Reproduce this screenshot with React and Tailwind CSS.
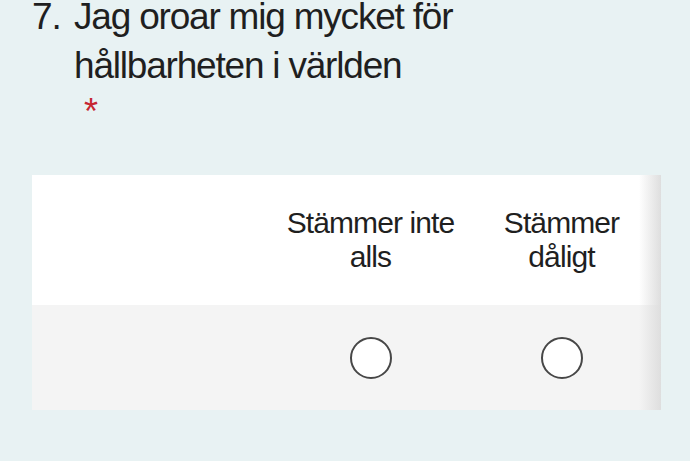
import React from 'react'

const columns = [
  { label: "Stämmer inte alls", lines: ["Stämmer inte", "alls"] },
  { label: "Stämmer dåligt", lines: ["Stämmer", "dåligt"] },
]

const Radio = ({ name, value }) => (
  <label className="flex items-center justify-center cursor-pointer">
    <input type="radio" name={name} value={value} className="sr-only peer" />
    <span className="block w-[42px] h-[42px] rounded-full border-2 border-[#474747] bg-white"></span>
  </label>
)

const App = () => {
  return (
    <div
      className="w-[690px] h-[461px] overflow-hidden bg-[#e8f2f3] text-[#1f1f1f]"
      style={{ fontFamily: '"Liberation Sans", Arial, sans-serif' }}
    >
      <div className="flex pl-[32px] text-[37px] leading-[34px] tracking-[-1.2px]">
        <span className="w-[42px] shrink-0">7.</span>
        <div>
          <h2 className="font-normal">
            <span className="block">Jag oroar mig mycket för</span>
            <span className="block mt-[15px]">hållbarheten i världen</span>
          </h2>
          <span className="block pl-[10px] mt-[14px] text-[36px] leading-[30px] tracking-normal text-[#c62631]">*</span>
        </div>
      </div>

      <div className="relative ml-[32px] mt-[48px] w-[629px] bg-white overflow-hidden">
        <div className="flex h-[130px] items-center">
          <div className="w-[243px] shrink-0"></div>
          {columns.map((col) => (
            <div key={col.label} className="w-[191px] shrink-0 text-center text-[30px] leading-[34px] tracking-[-0.9px]">
              {col.lines.map((l) => (
                <div key={l}>{l}</div>
              ))}
            </div>
          ))}
        </div>
        <div className="flex h-[105px] items-center bg-[#f4f4f4]">
          <div className="w-[243px] shrink-0"></div>
          {columns.map((col) => (
            <div key={col.label} className="w-[191px] shrink-0 flex justify-center">
              <Radio name="q7" value={col.label} />
            </div>
          ))}
        </div>
        <div className="absolute top-0 right-0 h-full w-[22px] bg-gradient-to-r from-transparent to-[#dedede]"></div>
      </div>
    </div>
  )
}

export default App
